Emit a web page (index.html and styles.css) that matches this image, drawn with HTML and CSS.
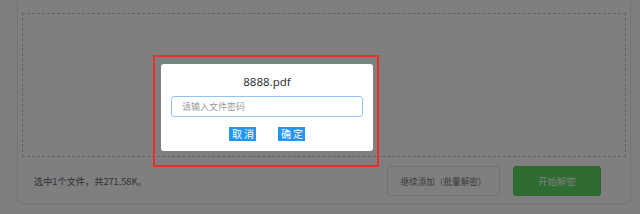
FILE: index.html
```html
<!DOCTYPE html>
<html lang="zh-CN">
<head>
<meta charset="utf-8">
<title>解密</title>
<link rel="stylesheet" href="styles.css">
</head>
<body>
<div class="card">
  <div class="drop"></div>
  <div class="footer">
    <span class="info">选中1个文件，共271.58K。</span>
    <div class="actions">
      <button class="btn btn-add">继续添加（批量解密）</button>
      <button class="btn btn-go">开始解密</button>
    </div>
  </div>
</div>
<div class="mask"></div>
<div class="dialog">
  <div class="dialog-title">8888.pdf</div>
  <input class="pwd" type="password" placeholder="请输入文件密码">
  <div class="dialog-btns">
    <button class="dbtn">取消</button>
    <button class="dbtn">确定</button>
  </div>
</div>
<div class="mark"></div>
</body>
</html>
```
FILE: styles.css
```css
* { box-sizing: border-box; }
html, body { margin: 0; padding: 0; }
body {
  background: #ffffff;
  font-family: "Noto Sans CJK SC", "Noto Sans", sans-serif;
  width: 640px;
  height: 214px;
  overflow: hidden;
}
.card {
  margin: -6px 10px 0 18px;
  width: 612px;
  height: 209px;
  background: #ffffff;
  border-radius: 6px;
  box-shadow: 0 0 3px rgba(0,0,0,0.22);
  padding: 19px 4px 0 4px;
  display: flex;
  flex-direction: column;
}
.drop {
  height: 144px;
  border: 1px dashed #c2c2c2;
}
.footer {
  flex: 1;
  display: flex;
  align-items: center;
  justify-content: space-between;
  padding: 2px 25px 0 12px;
}
.info {
  font-size: 9.2px;
  color: #606060;
}
.actions {
  display: flex;
  gap: 13px;
}
.btn {
  font-family: "Noto Sans CJK SC", sans-serif;
  height: 30px;
  border-radius: 3px;
  padding: 0;
  cursor: pointer;
}
.btn-add {
  width: 113px;
  background: #ffffff;
  border: 1px solid #e2e2e2;
  color: #777;
  font-size: 8.6px;
}
.btn-go {
  width: 88px;
  background: #5cd864;
  border: 1px solid #55cc5d;
  color: #f4fff4;
  font-size: 9.5px;
}
.mask {
  position: fixed;
  inset: 0;
  background: rgba(0,0,0,0.5);
}
.dialog {
  position: absolute;
  left: 161px;
  top: 64px;
  width: 212px;
  height: 87px;
  background: #ffffff;
  border-radius: 3px;
  padding: 9px 10px 10px;
  display: flex;
  flex-direction: column;
  align-items: center;
}
.dialog-title {
  font-family: "Noto Sans", sans-serif;
  font-size: 11.5px;
  line-height: 18px;
  height: 18px;
  color: #333;
}
.pwd {
  margin-top: 5px;
  width: 192px;
  height: 21px;
  border: 1px solid #94c4ec;
  border-radius: 3px;
  padding: 0 10px;
  font-family: "Noto Sans CJK SC", sans-serif;
  font-size: 9px;
  outline: none;
}
.pwd::placeholder { color: #9a9a9a; }
.dialog-btns {
  margin-top: 10px;
  display: flex;
  gap: 22px;
}
.dbtn {
  height: 14px;
  width: 27px;
  padding: 0 0 0 3px;
  border: none;
  background: #2196f3;
  color: #ffffff;
  font-family: "Noto Sans CJK SC", sans-serif;
  font-size: 10px;
  line-height: 14px;
  letter-spacing: 2px;
  text-align: left;
  cursor: pointer;
}
.mark {
  position: absolute;
  left: 153px;
  top: 55px;
  width: 226px;
  height: 112px;
  border: 2px solid #e8312b;
}
```
